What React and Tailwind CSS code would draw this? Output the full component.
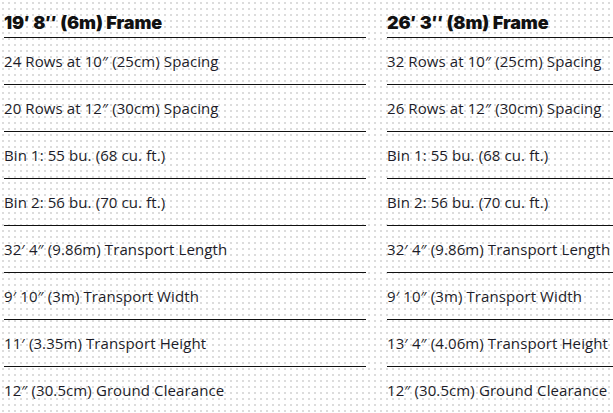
import React from 'react';

const frames = [
  {
    title: '19′ 8″ (6m) Frame',
    specs: [
      '24 Rows at 10″ (25cm) Spacing',
      '20 Rows at 12″ (30cm) Spacing',
      'Bin 1: 55 bu. (68 cu. ft.)',
      'Bin 2: 56 bu. (70 cu. ft.)',
      '32′ 4″ (9.86m) Transport Length',
      '9′ 10″ (3m) Transport Width',
      '11′ (3.35m) Transport Height',
      '12″ (30.5cm) Ground Clearance',
    ],
  },
  {
    title: '26′ 3″ (8m) Frame',
    specs: [
      '32 Rows at 10″ (25cm) Spacing',
      '26 Rows at 12″ (30cm) Spacing',
      'Bin 1: 55 bu. (68 cu. ft.)',
      'Bin 2: 56 bu. (70 cu. ft.)',
      '32′ 4″ (9.86m) Transport Length',
      '9′ 10″ (3m) Transport Width',
      '13′ 4″ (4.06m) Transport Height',
      '12″ (30.5cm) Ground Clearance',
    ],
  },
];

const FrameColumn = ({ frame }) => (
  <div className="w-[362px] shrink-0">
    <h3 className="h-[38px] pt-[12px] font-['Inter',sans-serif] text-[18px] font-black leading-[22px] tracking-[-0.1px] text-[#111] border-b-[1.5px] border-[#111]">
      {frame.title}
    </h3>
    <ul>
      {frame.specs.map((spec, i) => (
        <li
          key={i}
          className={`flex h-[47px] items-center text-[15px] tracking-[0.1px] text-[#1c1c28] ${
            i < frame.specs.length - 1 ? 'border-b-[1.5px] border-[#111]' : ''
          }`}
        >
          {spec}
        </li>
      ))}
    </ul>
  </div>
);

export default function App() {
  return (
    <div className="h-[413px] w-[613px] overflow-hidden bg-white bg-[radial-gradient(#dcdcdc_1px,transparent_1.2px)] bg-[size:6px_6px] font-['Open_Sans',sans-serif]">
      <div className="flex gap-[21px] pl-[4px]">
        {frames.map((frame) => (
          <FrameColumn key={frame.title} frame={frame} />
        ))}
      </div>
    </div>
  );
}
